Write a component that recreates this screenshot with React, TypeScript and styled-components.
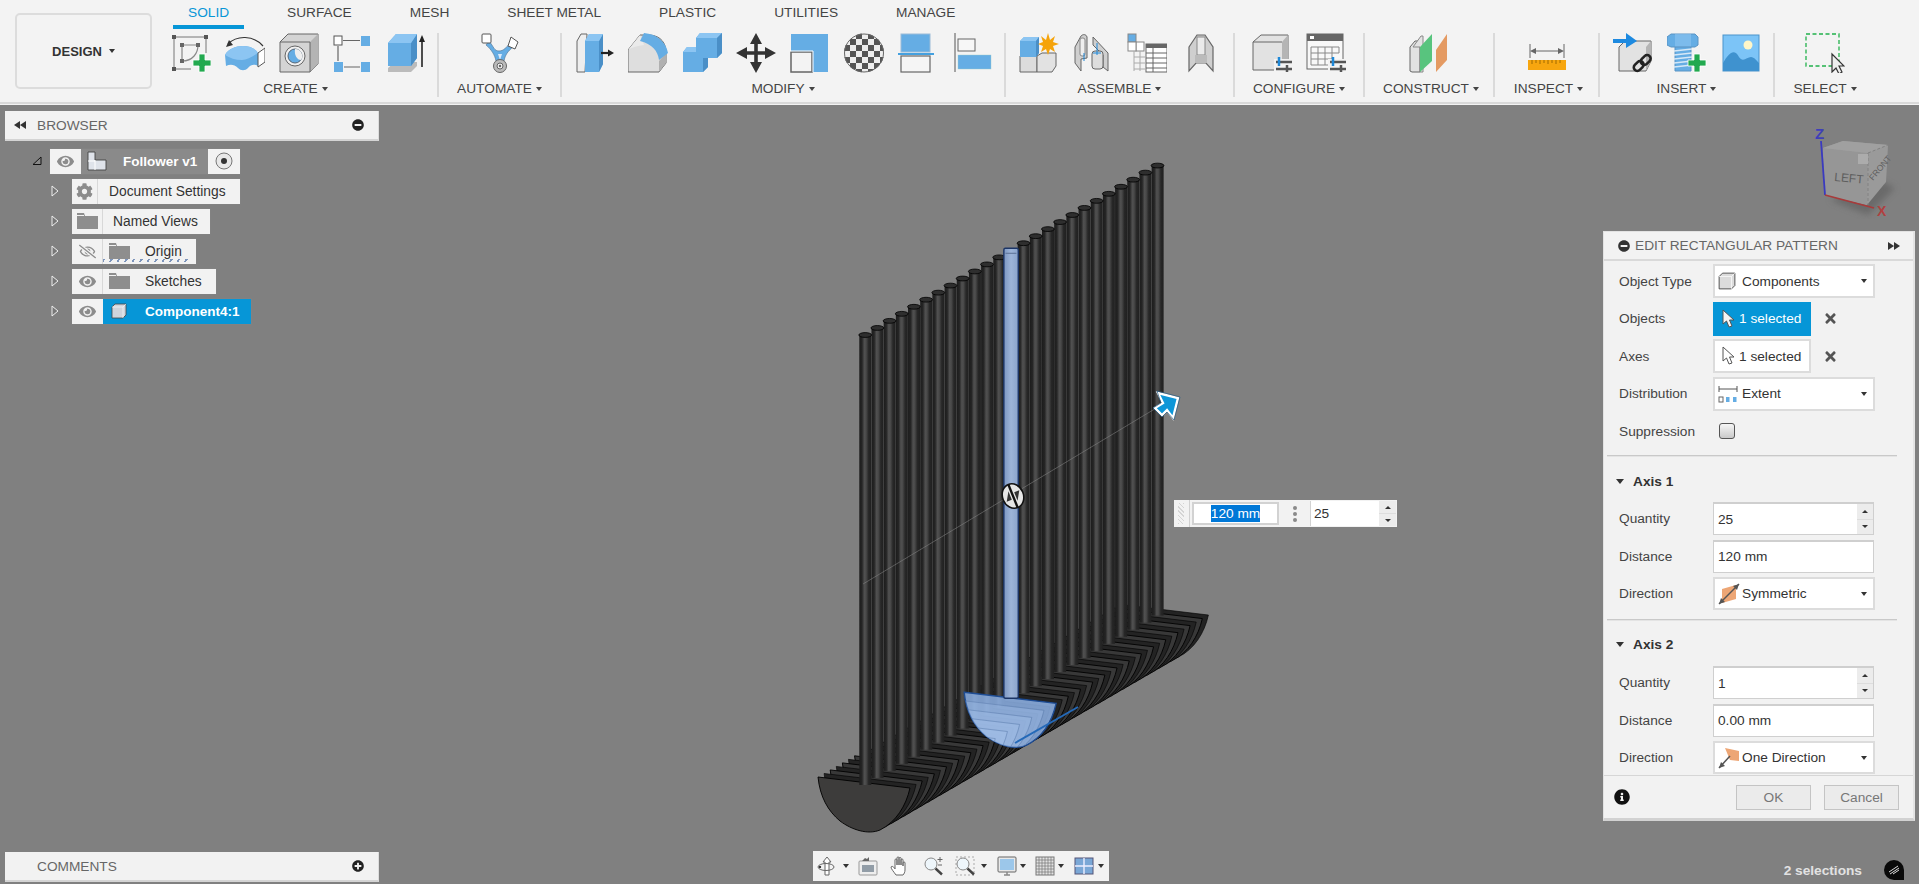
import React from 'react';
import styled, { createGlobalStyle } from 'styled-components';
import { FaCog, FaEye, FaRegEyeSlash, FaMinusCircle, FaPlusCircle, FaInfoCircle, FaTimes } from 'react-icons/fa';

const B = '#65ade4', BD = '#4a8fc7', BL = '#8cc5f2';

const Global = createGlobalStyle`
  html, body { margin: 0; padding: 0; height: 100%; overflow: hidden; background: #808080; }
  body { font-family: "Liberation Sans", Arial, sans-serif; font-size: 13.7px; color: #333; }
  #root { height: 100%; }
`;

const Page = styled.div`display: flex; flex-direction: column; height: 884px; width: 1919px; background: #f3f3f3;`;
const Toolbar = styled.header`
  display: flex; height: 102px; background: #f3f3f3; border-bottom: 2px solid #d9d9d9; margin-bottom: 1px; flex: none;
`;
const DesignButton = styled.button`
  margin: 13px 8px 0 15px; width: 137px; height: 76px; background: #f3f3f3; border: 2px solid #dcdcdc; border-radius: 5px;
  font: bold 13px "Liberation Sans", sans-serif; color: #333; display: flex; align-items: center; justify-content: center; gap: 7px;
`;
const Caret = styled.i<{ $s?: number; $c?: string }>`
  display: inline-block; width: 0; height: 0; flex: none;
  border-left: ${p => p.$s ?? 3.5}px solid transparent; border-right: ${p => p.$s ?? 3.5}px solid transparent;
  border-top: ${p => (p.$s ?? 3.5) + 0.5}px solid ${p => p.$c ?? '#333'};
`;
const Ribbon = styled.div`display: flex; flex-direction: column;`;
const Tabs = styled.nav`display: flex; gap: 28px; padding-left: 13px; height: 29px; margin-bottom: 4px; font-size: 13.7px;`;
const Tab = styled.div<{ $active?: boolean }>`
  padding: 3px 15px 0; height: 22px; line-height: 20px; color: ${p => (p.$active ? '#0696d7' : '#444')}; white-space: nowrap;
  border-bottom: 4px solid ${p => (p.$active ? '#0696d7' : 'transparent')};
`;
const Sections = styled.div`display: flex; height: 64px;`;
const Section = styled.section<{ $w: number; $last?: boolean }>`
  width: ${p => p.$w}px; box-sizing: border-box; display: flex; flex-direction: column; align-items: center; flex: none;
  border-right: 2px solid ${p => (p.$last ? 'transparent' : '#dadada')};
`;
const IconRow = styled.div`display: flex; height: 40px; margin-bottom: 7px;`;
const IconCell = styled.div`width: 54px; display: flex; justify-content: center; svg { display: block; }`;
const SectionLabel = styled.div<{ $dx: number }>`
  height: 17px; line-height: 17px; color: #444; display: flex; align-items: center; gap: 4px; white-space: nowrap;
  margin-left: ${p => Math.max(p.$dx, 0) * 2}px; margin-right: ${p => Math.max(-p.$dx, 0) * 2}px;
`;

const Viewport = styled.main`position: relative; flex: 1; background: #808080; overflow: hidden;`;
const ModelSvg = styled.svg`position: absolute; inset: 0; width: 100%; height: 100%;`;

const BarPanel = styled.div<{ $top: number }>`
  position: absolute; left: 5px; top: ${p => p.$top}px; width: 374px; height: 30px; box-sizing: border-box; background: #f2f2f2;
  border-right: 1px solid #ddd; border-bottom: 2px solid #d4d4d4;
  display: flex; align-items: center; color: #666;
`;
const BarLead = styled.span`width: 32px; display: flex; justify-content: center; padding-right: 3px; box-sizing: border-box;`;
const BarTitle = styled.span`flex: 1;`;
const BarEnd = styled.span`width: 40px; display: flex; justify-content: center; color: #222; font-size: 12px;`;

const Tree = styled.div`position: absolute; left: 32px; top: 43px; display: flex; flex-direction: column; gap: 4px; width: 240px;`;
const TreeRow = styled.div`display: flex; height: 26px; align-items: center;`;
const Expander = styled.div<{ $w: number }>`width: ${p => p.$w}px; flex: none; display: flex; svg { display: block; }`;
const Node = styled.div`display: flex; height: 25px; background: #f2f2f2; align-items: stretch; box-shadow: 0 0 2px rgba(150,150,150,.4);`;
const Cell = styled.div<{ $w: number; $bg?: string; $line?: boolean }>`
  width: ${p => p.$w}px; flex: none; display: flex; align-items: center; justify-content: center; box-sizing: border-box;
  background: ${p => p.$bg ?? 'transparent'}; color: #8c8c8c; font-size: 17px;
  border-right: ${p => (p.$line ? '1px solid #d8d8d8' : 'none')};
`;
const NodeText = styled.div<{ $pl: number; $w: number; $bold?: boolean; $light?: boolean; $bg?: string }>`
  width: ${p => p.$w}px; box-sizing: border-box; padding-left: ${p => p.$pl}px; line-height: 25px; white-space: nowrap;
  font-weight: ${p => (p.$bold ? 700 : 400)}; font-size: ${p => (p.$bold ? 13.5 : 13.8)}px; color: ${p => (p.$light ? '#fff' : '#333')};
  background-color: ${p => p.$bg ?? 'transparent'};
`;
const WavyWrap = styled.div`
  display: flex; position: relative;
  &::after {
    content: ''; position: absolute; left: 31px; right: 5px; bottom: 2px; height: 3px;
    background: repeating-linear-gradient(120deg, #7c94bb 0 2px, transparent 2px 6.500px);
  }
`;

const Panel = styled.aside`
  position: absolute; left: 1603px; top: 126px; width: 312px; height: 590px; box-sizing: border-box; background: #f2f2f2;
  border: 1px solid #e2e2e2; border-bottom: 3px solid #d2d2d2; border-right: 2px solid #e4e4e4; display: flex; flex-direction: column;
`;
const PanelHead = styled.div`
  height: 29px; flex: none; border-bottom: 2px solid #d9d9d9; display: flex; align-items: center; color: #666; white-space: nowrap;
  padding-left: 14px; box-sizing: border-box; gap: 5px;
`;
const PanelTitle = styled.span`flex: 1; font-size: 13.7px;`;
const HeadEnd = styled.span`width: 25px; display: flex; svg { display: block; }`;
const Rows = styled.div<{ $gap: number; $h: number; $pt?: number }>`
  display: flex; flex-direction: column; gap: ${p => p.$gap}px; padding-top: ${p => p.$pt ?? 0}px; > * { height: ${p => p.$h}px; }
`;
const FieldRow = styled.div`display: flex; align-items: center; padding-left: 15px;`;
const FieldLabel = styled.div`width: 94px; flex: none; color: #444;`;
const Select = styled.div`
  width: 162px; height: 100%; box-sizing: border-box; background: #fff; border: 2px solid #dcdcdc; display: flex; align-items: center;
  padding: 0 6px 0 3px; color: #333;
`;
const SelectIcon = styled.span`width: 24px; flex: none; display: flex; svg { display: block; }`;
const SelectText = styled.span`flex: 1;`;
const Picker = styled.div<{ $on?: boolean }>`
  width: 98px; height: 100%; box-sizing: border-box; display: flex; align-items: center; gap: 3px; padding-left: 7px;
  background: ${p => (p.$on ? '#0696d7' : '#fff')}; color: ${p => (p.$on ? '#fff' : '#333')};
  border: 2px solid ${p => (p.$on ? '#0696d7' : '#dcdcdc')};
`;
const ClearBtn = styled.span`margin-left: 12px; color: #555; font-size: 15px; display: flex;`;
const Check = styled.div`
  width: 16px; height: 16px; margin-left: 6px; border: 1px solid #555; border-radius: 3px; box-sizing: border-box;
  background: linear-gradient(#f6f6f6, #c9c9c9);
`;
const Hr = styled.div<{ $mt: number }>`height: 1px; background: #c9c9c9; border-bottom: 1px solid #e4e4e4; margin: ${p => p.$mt}px 16px 0 3px; flex: none;`;
const AxisHead = styled.div<{ $mt: number; $mb: number }>`
  height: 20px; margin: ${p => p.$mt}px 0 ${p => p.$mb}px 12px; display: flex; align-items: center; gap: 9px; font-weight: 700; color: #333; flex: none;
`;
const NumField = styled.div`
  width: 161px; height: 100%; box-sizing: border-box; background: #fff; border: 1px solid #cfcfcf; border-top-width: 2px;
  display: flex; align-items: center; padding-left: 3px; color: #333;
`;
const NumText = styled.span`flex: 1; padding-left: 1px;`;
const Spin = styled.div`width: 16px; height: 100%; display: flex; flex-direction: column; gap: 1px; background: #ddd; flex: none;`;
const SpinBtn = styled.div`flex: 1; background: #ececec; display: flex; align-items: center; justify-content: center;`;
const UpCaret = styled(Caret)`transform: rotate(180deg);`;
const Footer = styled.div`
  margin-top: auto; height: 43px; border-top: 1px solid #d6d6d6; display: flex; align-items: center; box-sizing: border-box; padding: 0 14px 0 10px; flex: none;
`;
const Info = styled.span`font-size: 16px; color: #111; display: flex; flex: 1;`;
const DlgBtn = styled.button`
  height: 25px; width: 75px; margin-left: 13px; background: #ebebeb; border: 1px solid #c4c4c4; color: #777;
  font: 13.7px "Liberation Sans", sans-serif; padding: 0;
`;

const Inline = styled.div`
  position: absolute; left: 1174px; top: 395px; width: 223px; height: 27px; background: #f2f2f2; display: flex; align-items: center; box-sizing: border-box;
`;
const Grip = styled.div`
  width: 16px; height: 100%; box-sizing: border-box; border-right: 1px solid #d0d0d0; margin-right: 2px;
  background: repeating-linear-gradient(45deg, #d4d4d4 0 1px, transparent 1px 3px) 4px 3px / 6px 21px no-repeat;
`;
const InlineInput = styled.div`
  width: 87px; height: 23px; box-sizing: border-box; border: 2px solid #d2d2d2; background: #fff; display: flex; justify-content: center; align-items: center;
`;
const Sel = styled.span`background: #0078d7; color: #fff; line-height: 17px;`;
const Dots = styled.div`width: 31px; display: flex; flex-direction: column; align-items: center; gap: 2px;`;
const Dot = styled.i`width: 4px; height: 4px; border-radius: 50%; background: #8a8a8a; display: block;`;
const InlineNum = styled.div`
  width: 69px; height: 25px; box-sizing: border-box; background: #fff; padding-left: 3px; line-height: 25px; border-left: 1px solid #d2d2d2;
`;
const InlineSpin = styled.div`width: 17px; height: 25px; display: flex; flex-direction: column; gap: 1px; background: #ddd;`;

const Nav = styled.nav`
  position: absolute; left: 813px; top: 746px; height: 30px; width: 296px; background: #f2f2f2; display: flex; align-items: center; box-sizing: border-box; padding-left: 4px;
`;
const NavCell = styled.div<{ $w: number; $gap: number }>`
  width: ${p => p.$w}px; display: flex; align-items: center; gap: ${p => p.$gap}px; flex: none; svg { display: block; flex: none; }
`;

const Status = styled.div`
  position: absolute; right: 15px; bottom: 4px; display: flex; align-items: center; gap: 22px; color: #e2e2e2; font-weight: 700; font-size: 13.7px;
  svg { display: block; }
`;

/* ---------- toolbar icons ---------- */
const I: React.FC<{ children: React.ReactNode; s?: number }> = ({ children, s = 40 }) => (
  <svg width={s} height={s} viewBox="0 0 40 40">{children}</svg>
);
const Plus = ({ x, y }: { x: number; y: number }) => (
  <path transform={`translate(${x} ${y})`} d="M6 0h6v6h6v6h-6v6H6v-6H0V6h6z" fill="#22a94f" stroke="#fff" strokeWidth=".8" />
);
const SketchI = () => (
  <I>
    <path d="M3 4H35V20M3 4V36H20" fill="none" stroke="#777" />
    {[[1, 2], [33, 2], [1, 34]].map(([x, y]) => <rect key={x * 100 + y} x={x} y={y} width="4" height="4" fill="#555" />)}
    <path d="M11 12H27C27 20 22 28 11 28Z" fill="none" stroke="#888" strokeWidth="1.2" />
    {[[9, 10], [25, 10], [9, 26]].map(([x, y]) => <rect key={x * 100 + y} x={x} y={y} width="4" height="4" fill="#666" />)}
    <Plus x={22} y={21} />
  </I>
);
const RevolveI = () => (
  <I>
    <path d="M3 11C12 2 28 2 38 13" fill="none" stroke="#333" strokeWidth="1.2" />
    <path d="M1 14L4 7 8 12Z" fill="#333" />
    <path d="M0 22C6 11 27 10 33 20V33C30 31 26 31 23 35 20 38 16 38 13 35 9 31 5 31 1 33Z" fill={B} />
    <path d="M0 22C6 11 27 10 33 20 27 24 22 27 17 27 10 27 5 25 0 22Z" fill={BL} />
    <path d="M33 20L40 15V29L33 34Z" fill="#fff" stroke="#555" />
  </I>
);
const BoxI = () => (
  <I>
    <path d="M1 9L9 1H39V31L31 39H1Z" fill="#d4d4d4" stroke="#666" />
    <path d="M31 39V9L39 1V31Z" fill="#b4b4b4" />
    <path d="M1 9H31V39" fill="none" stroke="#666" />
    <circle cx="16" cy="23" r="10" fill="#f0f0f0" stroke="#666" />
    <circle cx="16" cy="23" r="7" fill={B} stroke="#567" />
    <path d="M16 16A7 7 0 0 1 22 27C18 27 15 22 16 16Z" fill="#eee" />
  </I>
);
const PatternI = () => (
  <I>
    <rect x="1" y="3" width="8" height="9" fill="#fff" stroke="#555" />
    <rect x="28" y="3" width="9" height="10" fill={B} />
    <rect x="1" y="29" width="9" height="10" fill={B} />
    <rect x="28" y="29" width="9" height="10" fill={B} />
    <path d="M10 7.5H27M5 13V28M11 34H27" stroke="#666" strokeWidth="1.2" />
  </I>
);
const ExtrudeI = () => (
  <I>
    <path d="M1 35L8 29H30V33L24 39H1Z" fill="#bbb" />
    <path d="M1 10L9 1H30V25L24 33H1Z" fill={B} />
    <path d="M24 33V10L30 1V25Z" fill={BD} />
    <path d="M1 10H24L30 1H9Z" fill={BL} />
    <path d="M35 34V6" stroke="#222" strokeWidth="1.6" />
    <path d="M32 9L35 2 38 9Z" fill="#222" />
  </I>
);
const AutomateI = () => (
  <I>
    <path d="M9 8C14 14 14 18 19 18 24 18 26 14 31 10L33 14C28 18 25 22 24 28H16C15 22 11 16 6 12Z" fill={B} stroke="#5a7c9c" strokeWidth=".7" />
    <path d="M18 21L22 21 20 27Z" fill="#dbeafa" />
    <rect x="2" y="1" width="9" height="9" rx="1" fill="#fff" stroke="#555" />
    <path d="M31 4L38 9 35 16 28 13Z" fill="#fff" stroke="#555" />
    <circle cx="20" cy="33" r="6.5" fill="#bbb" stroke="#666" />
    <circle cx="20" cy="33" r="3" fill="#eee" stroke="#666" />
    <circle cx="20" cy="33" r="1.2" fill="#666" />
  </I>
);
const PressI = () => (
  <I>
    <path d="M3 8L7 1H13L11 39H3Z" fill="#eee" stroke="#666" />
    <path d="M11 8L15 1H29V31L25 39H11Z" fill={B} />
    <path d="M25 39V8L29 1V31Z" fill={BD} />
    <path d="M11 8H25L29 1H15Z" fill={BL} />
    <path d="M27 20H35" stroke="#222" strokeWidth="2.2" />
    <path d="M34 16.500L40 20 34 23.500Z" fill="#222" />
  </I>
);
const FilletI = () => (
  <I>
    <path d="M0 17L12 2H22C33 3 38 10 38 20V30L31 39H0Z" fill="#dedede" stroke="#666" />
    <path d="M31 39V28L38 20V30Z" fill="#b0b0b0" />
    <path d="M0 17L12 2 16 12 C 10 13 4 14 0 17Z" fill="#eaeaea" />
    <path d="M16 0C28 1 38 8 40 20L31 27C30 18 24 11 12 8Z" fill={B} />
  </I>
);
const CombineI = () => (
  <I>
    <path d="M14 5L18 0H40V20L35 25H14Z" fill={B} />
    <path d="M1 19L5 14H26V34L21 39H1Z" fill={B} />
    <path d="M14 5H35L40 0H18Z" fill={BL} />
    <path d="M1 19H14V14H5Z" fill={BL} />
    <path d="M35 25V5L40 0V20Z" fill={BD} />
    <path d="M21 39V25H26V34Z" fill={BD} />
  </I>
);
const MoveI = () => (
  <I>
    <path d="M20 0L26 11H21.800V18.200H29V14L40 20 29 26V21.800H21.800V29H26L20 40 14 29H18.200V21.800H11V26L0 20 11 14V18.200H18.200V11H14Z" fill="#333" />
  </I>
);
const ScaleI = () => (
  <I>
    <rect x="1" y="1" width="37" height="38" fill={B} />
    <rect x="1" y="19" width="21" height="20" fill="#f3f3f3" stroke="#666" strokeWidth="1.5" />
    <path d="M0 18H23V39" fill="none" stroke="#fff" />
  </I>
);
const AppearanceI = () => {
  const cells: React.ReactNode[] = [];
  for (let r = 0; r < 7; r++) for (let c = 0; c < 7; c++) if ((r + c) % 2 === 0) {
    cells.push(<rect key={`${r}-${c}`} x={c * 6} y={r * 6} width="6" height="6" fill="#555" />);
  }
  return (
    <I>
      <clipPath id="ball"><ellipse cx="20" cy="20" rx="20" ry="19.5" /></clipPath>
      <ellipse cx="20" cy="20" rx="20" ry="19.5" fill="#eee" />
      <g clipPath="url(#ball)">{cells}</g>
      <ellipse cx="20" cy="20" rx="19.5" ry="19" fill="none" stroke="#666" />
    </I>
  );
};
const SplitI = () => (
  <I>
    <rect x="3" y="1" width="29" height="18" fill={B} stroke="#9cbcd8" />
    <path d="M0 21H36" stroke="#0a84d8" strokeWidth="1.5" />
    <rect x="3" y="23" width="29" height="16" fill="#f5f5f5" stroke="#666" strokeWidth="1.2" />
  </I>
);
const AlignI = () => (
  <I>
    <path d="M3 0V39" stroke="#555" />
    <rect x="6" y="6" width="17" height="12" fill="#f7f7f7" stroke="#666" />
    <rect x="6" y="22" width="33" height="14" fill={B} stroke="#9cc" strokeWidth=".4" />
  </I>
);
const NewCompI = () => (
  <I>
    <path d="M1 23L5 20H18V39H1Z" fill="#dcdcdc" stroke="#666" />
    <path d="M18 23L23 20H37V33L33 39H18Z" fill="#e2e2e2" stroke="#666" />
    <path d="M1 8L5 4H20V20L17 24H1Z" fill={B} />
    <path d="M1 8H17L20 4H5Z" fill={BL} />
    <path d="M17 24V8L20 4V20Z" fill={BD} />
    <path d="M29 0L31 7 36 3 34 9 40 11 34 13 36 19 31 16 29 22 27 16 22 19 24 13 19 11 24 9 22 3 27 7Z" fill="#f5a30a" />
  </I>
);
const JointI = () => (
  <I>
    <path d="M2 14L8 3C10 1 13 1 14 4V25L8 26V38L2 30Z" fill="#cfcfcf" stroke="#666" />
    <rect x="7" y="5" width="5" height="18" rx="2" fill="#eee" stroke="#888" />
    <path d="M20 4L35 20V38L30 34V22L20 12Z" fill="#cfcfcf" stroke="#666" />
    <rect x="19" y="18" width="11" height="18" rx="3" fill="#ddd" stroke="#666" />
    <path d="M24 10V22M20 20H28M11 20V28" stroke="#1e88d8" />
  </I>
);
const TableI = () => (
  <I>
    <rect x="1" y="1" width="8" height="8" fill={B} stroke="#888" />
    <rect x="9" y="9" width="8" height="9" fill="#fff" stroke="#888" />
    <rect x="1" y="9" width="8" height="9" fill="#fff" stroke="#888" />
    <path d="M7 18V38M13 18V38M7 24H18M7 30H18M7 36H18" stroke="#aaa" />
    <rect x="19" y="11" width="21" height="28" fill="#fff" stroke="#666" />
    <rect x="19" y="11" width="21" height="4" fill="#666" />
    <path d="M19 20H40M19 25H40M19 30H40M19 35H40M26 15V39" stroke="#666" />
  </I>
);
const JointOriginI = () => (
  <I>
    <path d="M8 14L16 2H24L32 14V38L25 30H15L8 38Z" fill="#cfcfcf" stroke="#666" strokeWidth="1.2" />
    <path d="M16 4H24V22H16Z" fill="#eaeaea" stroke="#888" />
    <path d="M14 30V22H26V30" fill="#bbb" />
  </I>
);
const Sliders = () => (
  <g>
    <rect x="22" y="26" width="18" height="13" fill="#f3f3f3" />
    <path d="M24 29H40M24 36H40" stroke="#555" strokeWidth="2.5" />
    <path d="M27 24V33" stroke="#1e88d8" strokeWidth="2.5" />
    <path d="M35 32V39" stroke="#555" strokeWidth="2.5" />
  </g>
);
const ConfigBoxI = () => (
  <I>
    <path d="M1 9L9 2H36V29L30 37H1Z" fill="#e2e2e2" stroke="#666" />
    <path d="M30 37V9L36 2V29Z" fill="#b5b5b5" />
    <path d="M1 9H30" stroke="#666" />
    <Sliders />
  </I>
);
const ConfigTableI = () => (
  <I>
    <rect x="1" y="1" width="36" height="35" fill="#f8f8f8" stroke="#666" />
    <rect x="1" y="1" width="36" height="7" fill="#666" />
    <rect x="4" y="3" width="4" height="3" fill="#fff" />
    <path d="M5 14H33M5 20H33M5 26H28M5 32H22M5 14V32M12 14V32M19 14V32M26 14V26M33 14V20" stroke="#888" fill="none" />
    <Sliders />
  </I>
);
const ConstructI = () => (
  <I>
    <path d="M1 14L6 8H11V39H3L1 38Z" fill="#e2e2e2" stroke="#666" />
    <path d="M11 14H4L12 3H14V39H11Z" fill="#e2e2e2" stroke="#888" />
    <path d="M11 14L23 1V28L11 39Z" fill="#58c47e" />
    <path d="M27 17L38 1V27L27 39Z" fill="#e49a62" />
  </I>
);
const InspectI = () => (
  <I>
    <path d="M3 11V25M37 11V25" stroke="#666" />
    <path d="M5 18H35" stroke="#666" />
    <path d="M3 18L9 15V21ZM37 18L31 15V21Z" fill="#666" />
    <rect x="1" y="27" width="38" height="10" fill="#f7a60f" />
    <path d="M5 27v4M9 27v3M13 27v4M17 27v3M21 27v4M25 27v3M29 27v4M33 27v3" stroke="#a06a00" />
  </I>
);
const DeriveI = () => (
  <I>
    <path d="M6 14L12 8H38V28L33 38H6Z" fill="#e2e2e2" stroke="#666" />
    <path d="M33 38V14L38 8V28Z" fill="#b5b5b5" />
    <path d="M0 6H13V0L24 8 13 15V10H0Z" fill="#1e8ae0" />
    <g fill="none" stroke="#222" strokeWidth="2.6">
      <rect x="20" y="30" width="11" height="7" rx="3.5" transform="rotate(-45 25 33)" />
      <rect x="27" y="24" width="11" height="7" rx="3.5" transform="rotate(-45 32 27)" />
    </g>
  </I>
);
const BoltI = () => (
  <I>
    <path d="M0 4L4 1H28L31 4V12L28 14H4L0 12Z" fill={B} stroke="#5a94c4" />
    <path d="M8 1H24V14H8Z" fill={BL} opacity=".6" />
    <path d="M8 14H24V38H8Z" fill={B} stroke="#5a94c4" />
    <path d="M7 18L25 16M7 22L25 20M7 26L25 24M7 30L25 28M7 34L25 32" stroke="#d6e8f7" strokeWidth="1.3" />
    <Plus x={21} y={21} />
  </I>
);
const ImageI = () => (
  <I>
    <rect x="2" y="2" width="36" height="36" fill="#7cc4f7" stroke="#4a94cc" />
    <circle cx="27" cy="12" r="4.5" fill="#fff6c8" />
    <path d="M2 30C8 20 13 15 18 24 22 30 26 24 30 24 33 24 36 28 38 30V38H2Z" fill="#3f92cf" />
  </I>
);
const SelectI = () => (
  <I>
    <rect x="1" y="1" width="33" height="32" fill="none" stroke="#22b14c" strokeWidth="1.3" strokeDasharray="4 2.5" />
    <path d="M27 21V39L31 35 34 41 37 39 34 33H39Z" fill="#eee" stroke="#333" strokeWidth="1.2" />
  </I>
);

/* ---------- nav icons ---------- */
const N: React.FC<{ children: React.ReactNode }> = ({ children }) => (
  <svg width="20" height="20" viewBox="0 0 20 20">{children}</svg>
);
const Orbit = () => (
  <N>
    <path d="M10 1L14 6H12V19H8V6H6Z" fill="#fff" stroke="#666" />
    <ellipse cx="9" cy="11" rx="8" ry="3.5" fill="none" stroke="#666" />
    <circle cx="3" cy="11" r="1.2" fill="#333" />
  </N>
);
const Capture = () => (
  <N>
    <rect x="1" y="5" width="18" height="14" rx="1" fill="#eee" stroke="#999" />
    <rect x="4" y="9" width="12" height="7" fill="#6b7a89" opacity=".7" />
    <path d="M4 5L7 2 9 3 11 1V5Z" fill="#666" />
  </N>
);
const Hand = () => (
  <N>
    <path d="M6 19C4 16 1 13 1 11 2 9.5 4 11 5 13V4C5 2.5 7 2.5 7 4V9V2C7 .5 9 .5 9 2V9V2.5C9 1 11 1 11 2.5V9V4C11 2.5 13 2.5 13 4V10V7C13 5.5 15 5.5 15 7V14C15 16 14 18 13 19Z" fill="#fff" stroke="#666" />
  </N>
);
const ZoomIcon = ({ plus, box }: { plus?: boolean; box?: boolean }) => (
  <N>
    {box && <rect x="1" y="1" width="18" height="18" fill="none" stroke="#aaa" strokeDasharray="2 2" />}
    <circle cx="8" cy="8" r="6" fill="#eef6fb" stroke="#888" />
    <path d="M12.5 12.5L19 18.5" stroke="#444" strokeWidth="2.4" />
    {plus && <path d="M17 1V6M14.5 3.5H19.5M15 9H19" stroke="#666" />}
  </N>
);
const Display = () => (
  <N>
    <rect x="1" y="1" width="18" height="15" rx="1" fill="#e8e8e8" stroke="#666" />
    <rect x="3" y="3" width="14" height="11" fill="#9cc7ea" />
    <path d="M7 19H13M10 16V19" stroke="#888" strokeWidth="1.5" />
  </N>
);
const Grid = () => (
  <N>
    <rect x="1" y="1" width="18" height="18" fill="#e2e2e2" stroke="#777" />
    <path d="M4 1V19M7 1V19M10 1V19M13 1V19M16 1V19M1 4H19M1 7H19M1 10H19M1 13H19M1 16H19" stroke="#777" strokeWidth=".7" />
  </N>
);
const Views = () => (
  <N>
    <rect x="1" y="2" width="18" height="16" fill="#7aa7d6" stroke="#557" />
    <path d="M10 2V18M1 10H19" stroke="#eef" strokeWidth="1.4" />
  </N>
);

/* ---------- tree icons ---------- */
const Tri = ({ open }: { open?: boolean }) => open ? (
  <svg width="10" height="10" viewBox="0 0 10 10"><path d="M1 8.5H9V1Z" fill="#888" stroke="#111" /></svg>
) : (
  <svg width="10" height="12" viewBox="0 0 10 12"><path d="M2 1L8 6 2 11Z" fill="#777" stroke="#eee" /></svg>
);
const Folder = () => (
  <svg width="21" height="16" viewBox="0 0 21 16"><path d="M0 0H7L8 3H21V16H0Z" fill="#8e8e8e" /><path d="M0 2.5H7" stroke="#f2f2f2" /></svg>
);
const CubeSmall = ({ c = '#cfd4dc', w = 16 }: { c?: string; w?: number }) => (
  <svg width={w} height={w} viewBox="0 0 16 16">
    <path d="M1 4L4 1H15V12L12 15H1Z" fill={c} stroke="#444" strokeWidth=".8" />
    <path d="M1 4H12V15M12 4L15 1" fill="none" stroke="#fff" strokeWidth=".6" />
  </svg>
);
const ComponentIcon = () => (
  <svg width="20" height="20" viewBox="0 0 20 20">
    <path d="M1 1H8V9H19V19H1Z" fill="#dfe3ea" stroke="#444" strokeWidth=".9" />
    <path d="M8 9V19M1 10H8" stroke="#fff" />
  </svg>
);
const Radio = () => (
  <svg width="18" height="18" viewBox="0 0 18 18">
    <circle cx="9" cy="9" r="8" fill="#e8e8e8" stroke="#777" />
    <circle cx="9" cy="9" r="3" fill="#333" />
  </svg>
);
const Arrow = ({ on }: { on?: boolean }) => (
  <svg width="14" height="20" viewBox="0 0 14 20">
    <path d="M1 1V15L4.5 12 7 18 10 17 7.500 11H12Z" fill={on ? '#f4f4f4' : '#fff'} stroke="#555" strokeWidth="1" />
  </svg>
);
const Back = ({ flip }: { flip?: boolean }) => (
  <svg width="12" height="8" viewBox="0 0 12 8" style={flip ? { transform: 'scaleX(-1)' } : undefined}>
    <path d="M6 0V8L0 4ZM12 0V8L6 4Z" fill="#333" />
  </svg>
);

/* ---------- 3D model ---------- */
const STEP_X = 12.18, STEP_Y = -7.06, COUNT = 25;
const FACE = 'M818 777L910 788C906 806 896 822 880 830C868 835 852 830 840 821C828 811 820 797 818 777Z';
const Slice = ({ t, fill, sw = 0.8, stroke = '#000' }: { t: number; fill: string; sw?: number; stroke?: string }) => (
  <path d={FACE} transform={`translate(${t * STEP_X} ${t * STEP_Y})`} fill={fill} stroke={stroke} strokeWidth={sw} />
);
const Rod = ({ i, sel }: { i: number; sel?: boolean }) => {
  const x = 859.3 + i * STEP_X, top = 335 + i * STEP_Y, bot = 785 + i * STEP_Y;
  return sel ? (
    <g>
      <rect x={x - 1.6} y={top - 2} width="14.4" height={bot - top} fill="url(#rodSel)" stroke="#1c3566" strokeWidth="1.4" rx="1.5" />
      <path d={`M${x} ${top + 3}H${x + 11}`} stroke="#5a6f94" />
    </g>
  ) : (
    <g>
      <rect x={x} y={top} width="12" height={bot - top} fill="url(#rod)" />
      <ellipse cx={x + 5.9} cy={top} rx="6.4" ry="2.4" fill="#2e2e2e" stroke="#000" strokeWidth=".8" />
    </g>
  );
};
const Model = () => {
  const idx = Array.from({ length: COUNT }, (_, k) => COUNT - 1 - k);
  return (
    <ModelSvg viewBox="0 105 1919 779">
      <defs>
        <linearGradient id="rod">
          <stop offset="0" stopColor="#1c1c1c" /><stop offset=".22" stopColor="#252525" />
          <stop offset=".42" stopColor="#505050" /><stop offset=".56" stopColor="#4a4a4a" />
          <stop offset=".78" stopColor="#272727" /><stop offset="1" stopColor="#202020" />
        </linearGradient>
        <linearGradient id="rodSel">
          <stop offset="0" stopColor="#7d97c2" /><stop offset=".5" stopColor="#9db4d8" /><stop offset="1" stopColor="#8aa3cb" />
        </linearGradient>
        <filter id="soft"><feGaussianBlur stdDeviation="3" /></filter>
        <clipPath id="selFace">
          <path d={FACE} transform={`translate(${12 * STEP_X} ${12 * STEP_Y})`} />
        </clipPath>
      </defs>
      {idx.map(i => (
        <g key={i}>
          <Slice t={i + 0.5} fill="#232323" sw={0.6} />
          <Slice t={i} fill={i === 0 ? '#3d3c3b' : '#383838'} sw={0.9} />
          {i !== 12 && <Rod i={i} />}
        </g>
      ))}
      <path d="M863 584L1163 404" stroke="#8f8f8f" strokeWidth=".7" opacity=".7" />
      <Slice t={12} fill="rgba(140,176,228,.86)" stroke="#1f4d94" sw={1.4} />
      <g clipPath="url(#selFace)">
        {[11, 10, 9, 8, 7, 6, 5].map(t => (
          <Slice key={t} t={t} fill="rgba(170,198,236,.28)" stroke="rgba(96,128,176,.7)" sw={.8} />
        ))}
      </g>
      <Rod i={12} sel />
      <path d="M1015 743L1078 707" stroke="#2469b8" strokeWidth="2" />
      <g transform="translate(1013 496) rotate(-22)">
        <ellipse rx="10.500" ry="12.500" fill="#e6e6e6" stroke="#111" strokeWidth="1.6" />
        <path d="M0 -12V12" stroke="#111" strokeWidth="2.4" />
        <path d="M-2.500 -6L-8 3H-2.500ZM2.500 6L8 -3H2.500Z" fill="#333" />
      </g>
      <path d="M1158 393L1178 398 1173 418 1167 410 1162 415 1155 408 1163 403Z" fill="#0d96d8" stroke="#fff" strokeWidth="2.4" />
      <path d="M1157 391L1180 397 1174 420 1167 412 1162 417 1153 408 1161 403Z" fill="none" stroke="#2a5f86" strokeWidth=".7" />
      {/* view cube */}
      <path d="M1830 200L1868 215 1895 188 1880 180Z" fill="#555" opacity=".5" filter="url(#soft)" />
      <path d="M1823 148L1843 141 1888 145 1886 182 1867 205 1825 195Z" fill="#9a9a9a" />
      <path d="M1823 148L1868 153 1867 205 1825 195Z" fill="#969696" />
      <path d="M1823 148L1843 141 1888 145 1868 153Z" fill="#a0a0a0" />
      <path d="M1868 153V205M1868 153L1888 145" stroke="#818181" strokeDasharray="3 2" fill="none" />
      <rect x="1858" y="154" width="10" height="10" fill="#acacac" />
      <text x="1834" y="181" fontSize="12" fontFamily="Liberation Sans, sans-serif" fill="#5e5e5e" transform="rotate(5 1834 181)">LEFT</text>
      <text x="1873" y="181" fontSize="8.500" fontFamily="Liberation Sans, sans-serif" fill="#5e5e5e" transform="rotate(-50 1873 181)">FRONT</text>
      <path d="M1821 141L1825 195" stroke="#3a3ac0" strokeWidth="1.8" />
      <path d="M1825 195L1874 208" stroke="#a83a3a" strokeWidth="1.8" />
      <text x="1815" y="139" fontSize="15" fontWeight="700" fontFamily="Liberation Sans, sans-serif" fill="#3f3fb8">Z</text>
      <text x="1877" y="216" fontSize="14" fontWeight="700" fontFamily="Liberation Sans, sans-serif" fill="#b04040">X</text>
    </ModelSvg>
  );
};

const SECTIONS: { label: string; w: number; dx?: number; icons: React.FC[] }[] = [
  { label: 'CREATE', w: 279, dx: -3, icons: [SketchI, RevolveI, BoxI, PatternI, ExtrudeI] },
  { label: 'AUTOMATE', w: 123, icons: [AutomateI] },
  { label: 'MODIFY', w: 444, icons: [PressI, FilletI, CombineI, MoveI, ScaleI, AppearanceI, SplitI, AlignI] },
  { label: 'ASSEMBLE', w: 229, icons: [NewCompI, JointI, TableI, JointOriginI] },
  { label: 'CONFIGURE', w: 130, icons: [ConfigBoxI, ConfigTableI] },
  { label: 'CONSTRUCT', w: 130, dx: 2, icons: [ConstructI] },
  { label: 'INSPECT', w: 105, dx: 2, icons: [InspectI] },
  { label: 'INSERT', w: 175, icons: [DeriveI, BoltI, ImageI] },
  { label: 'SELECT', w: 102, icons: [SelectI] },
];
const TABS = ['SOLID', 'SURFACE', 'MESH', 'SHEET METAL', 'PLASTIC', 'UTILITIES', 'MANAGE'];

const DirSym = () => (
  <svg width="22" height="22" viewBox="0 0 22 22">
    <path d="M4 6L18 2V16L4 20Z" fill="#eda675" />
    <path d="M1 21L21 1" stroke="#555" strokeWidth="1.5" />
    <path d="M21 1L15 3 19 7ZM1 21L7 19 3 15Z" fill="#555" />
  </svg>
);
const DirOne = () => (
  <svg width="22" height="22" viewBox="0 0 22 22">
    <path d="M7 1L21 4V14L12 13Z" fill="#eda675" />
    <path d="M1 21L12 9" stroke="#555" strokeWidth="1.5" />
    <path d="M1 21L7 19 3 15Z" fill="#555" />
  </svg>
);
const Extent = () => (
  <svg width="20" height="18" viewBox="0 0 20 18">
    <path d="M1 1V7M19 1V7M1 4H19" stroke="#555" />
    <rect x="1" y="12" width="4" height="5" fill="#fff" stroke="#666" />
    <rect x="8" y="12" width="3.500" height="5" fill={B} />
    <rect x="15" y="12" width="3.500" height="5" fill={B} />
  </svg>
);
const Spinner = () => (
  <Spin>
    <SpinBtn><UpCaret $s={3} /></SpinBtn>
    <SpinBtn><Caret $s={3} /></SpinBtn>
  </Spin>
);

export default function App() {
  return (
    <Page>
      <Global />
      <Toolbar>
        <DesignButton>DESIGN <Caret /></DesignButton>
        <Ribbon>
          <Tabs>{TABS.map((t, i) => <Tab key={t} $active={i === 0}>{t}</Tab>)}</Tabs>
          <Sections>
            {SECTIONS.map((s, i) => (
              <Section key={s.label} $w={s.w} $last={i === SECTIONS.length - 1}>
                <IconRow>{s.icons.map((Ic, k) => <IconCell key={k}><Ic /></IconCell>)}</IconRow>
                <SectionLabel $dx={s.dx ?? 0}>{s.label} <Caret $c="#444" /></SectionLabel>
              </Section>
            ))}
          </Sections>
        </Ribbon>
      </Toolbar>
      <Viewport>
        <Model />
        <BarPanel $top={6}>
          <BarLead><Back /></BarLead>
          <BarTitle>BROWSER</BarTitle>
          <BarEnd><FaMinusCircle /></BarEnd>
        </BarPanel>
        <Tree>
          <TreeRow>
            <Expander $w={18}><Tri open /></Expander>
            <Node>
              <Cell $w={31}><FaEye /></Cell>
              <Cell $w={32} $bg="#8a8a8a"><ComponentIcon /></Cell>
              <NodeText $w={95} $pl={10} $bold $light $bg="#8a8a8a">Follower v1</NodeText>
              <Cell $w={32}><Radio /></Cell>
            </Node>
          </TreeRow>
          <TreeRow>
            <Expander $w={40}><Expander $w={18} /><Tri /></Expander>
            <Node>
              <Cell $w={26} $line><FaCog /></Cell>
              <NodeText $w={142} $pl={11}>Document Settings</NodeText>
            </Node>
          </TreeRow>
          <TreeRow>
            <Expander $w={40}><Expander $w={18} /><Tri /></Expander>
            <Node>
              <Cell $w={31} $line><Folder /></Cell>
              <NodeText $w={107} $pl={10}>Named Views</NodeText>
            </Node>
          </TreeRow>
          <TreeRow>
            <Expander $w={40}><Expander $w={18} /><Tri /></Expander>
            <WavyWrap>
              <Node>
                <Cell $w={31} $line><FaRegEyeSlash /></Cell>
                <Cell $w={32}><Folder /></Cell>
                <NodeText $w={61} $pl={10}>Origin</NodeText>
              </Node>
            </WavyWrap>
          </TreeRow>
          <TreeRow>
            <Expander $w={40}><Expander $w={18} /><Tri /></Expander>
            <Node>
              <Cell $w={31} $line><FaEye /></Cell>
              <Cell $w={32}><Folder /></Cell>
              <NodeText $w={81} $pl={10}>Sketches</NodeText>
            </Node>
          </TreeRow>
          <TreeRow>
            <Expander $w={40}><Expander $w={18} /><Tri /></Expander>
            <Node>
              <Cell $w={31}><FaEye /></Cell>
              <Cell $w={32} $bg="#0696d7"><CubeSmall /></Cell>
              <NodeText $w={116} $pl={10} $bold $light $bg="#0696d7">Component4:1</NodeText>
            </Node>
          </TreeRow>
        </Tree>
        <BarPanel $top={747}>
          <BarLead />
          <BarTitle>COMMENTS</BarTitle>
          <BarEnd><FaPlusCircle /></BarEnd>
        </BarPanel>

        <Inline>
          <Grip />
          <InlineInput><Sel>120 mm</Sel></InlineInput>
          <Dots><Dot /><Dot /><Dot /></Dots>
          <InlineNum>25</InlineNum>
          <InlineSpin>
            <SpinBtn><UpCaret $s={3} /></SpinBtn>
            <SpinBtn><Caret $s={3} /></SpinBtn>
          </InlineSpin>
        </Inline>

        <Panel>
          <PanelHead>
            <FaMinusCircle size={12} color="#333" />
            <PanelTitle>EDIT RECTANGULAR PATTERN</PanelTitle>
            <HeadEnd><Back flip /></HeadEnd>
          </PanelHead>
          <Rows $gap={3.5} $h={34} $pt={3}>
            <FieldRow>
              <FieldLabel>Object Type</FieldLabel>
              <Select><SelectIcon><CubeSmall c="#dcdcdc" w={18} /></SelectIcon><SelectText>Components</SelectText><Caret /></Select>
            </FieldRow>
            <FieldRow>
              <FieldLabel>Objects</FieldLabel>
              <Picker $on><Arrow on />1 selected</Picker>
              <ClearBtn><FaTimes /></ClearBtn>
            </FieldRow>
            <FieldRow>
              <FieldLabel>Axes</FieldLabel>
              <Picker><Arrow />1 selected</Picker>
              <ClearBtn><FaTimes /></ClearBtn>
            </FieldRow>
            <FieldRow>
              <FieldLabel>Distribution</FieldLabel>
              <Select><SelectIcon><Extent /></SelectIcon><SelectText>Extent</SelectText><Caret /></Select>
            </FieldRow>
            <FieldRow>
              <FieldLabel>Suppression</FieldLabel>
              <Check />
            </FieldRow>
          </Rows>
          <Hr $mt={7} />
          <AxisHead $mt={14} $mb={11}><Caret $s={4.5} $c="#333" />Axis 1</AxisHead>
          <Rows $gap={4.5} $h={33}>
            <FieldRow>
              <FieldLabel>Quantity</FieldLabel>
              <NumField><NumText>25</NumText><Spinner /></NumField>
            </FieldRow>
            <FieldRow>
              <FieldLabel>Distance</FieldLabel>
              <NumField><NumText>120 mm</NumText></NumField>
            </FieldRow>
            <FieldRow>
              <FieldLabel>Direction</FieldLabel>
              <Select><SelectIcon><DirSym /></SelectIcon><SelectText>Symmetric</SelectText><Caret /></Select>
            </FieldRow>
          </Rows>
          <Hr $mt={9} />
          <AxisHead $mt={13} $mb={12}><Caret $s={4.5} $c="#333" />Axis 2</AxisHead>
          <Rows $gap={4.5} $h={33}>
            <FieldRow>
              <FieldLabel>Quantity</FieldLabel>
              <NumField><NumText>1</NumText><Spinner /></NumField>
            </FieldRow>
            <FieldRow>
              <FieldLabel>Distance</FieldLabel>
              <NumField><NumText>0.00 mm</NumText></NumField>
            </FieldRow>
            <FieldRow>
              <FieldLabel>Direction</FieldLabel>
              <Select><SelectIcon><DirOne /></SelectIcon><SelectText>One Direction</SelectText><Caret /></Select>
            </FieldRow>
          </Rows>
          <Footer>
            <Info><FaInfoCircle /></Info>
            <DlgBtn>OK</DlgBtn>
            <DlgBtn>Cancel</DlgBtn>
          </Footer>
        </Panel>

        <Nav>
          <NavCell $w={41} $gap={6}><Orbit /><Caret /></NavCell>
          <NavCell $w={32} $gap={0}><Capture /></NavCell>
          <NavCell $w={33} $gap={0}><Hand /></NavCell>
          <NavCell $w={32} $gap={0}><ZoomIcon plus /></NavCell>
          <NavCell $w={42} $gap={6}><ZoomIcon box /><Caret /></NavCell>
          <NavCell $w={38} $gap={3}><Display /><Caret /></NavCell>
          <NavCell $w={39} $gap={3}><Grid /><Caret /></NavCell>
          <NavCell $w={31} $gap={4}><Views /><Caret /></NavCell>
        </Nav>

        <Status>
          2 selections
          <svg width="20" height="20" viewBox="0 0 20 20">
            <path d="M10 0A10 10 0 0 1 20 10V20H10A10 10 0 0 1 10 0Z" fill="#0a0a0a" />
            <path d="M5 12L14 6M6 14L15 8M9 14L15 10" stroke="#ddd" strokeWidth="1" />
          </svg>
        </Status>
      </Viewport>
    </Page>
  );
}
